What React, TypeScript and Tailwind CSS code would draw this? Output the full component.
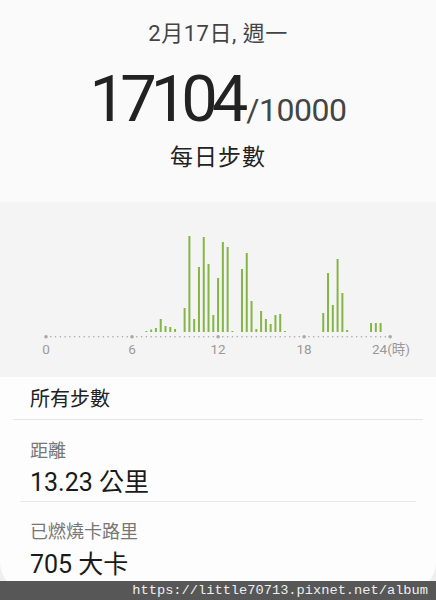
import React from "react";

// bar index (20-minute slots, 72 per day) -> height in px
const bars: [number, number][] = [
  [21, 1], [22, 2.5], [23, 4], [24, 13], [25, 6], [26, 5], [27, 3],
  [29, 24], [30, 96], [31, 13], [32, 65], [33, 95], [34, 68], [35, 17],
  [36, 54], [37, 90], [38, 85], [39, 1], [41, 63], [42, 79], [43, 31],
  [44, 3], [45, 21], [46, 13], [47, 8], [48, 17], [49, 18], [50, 1],
  [58, 19], [59, 59], [60, 27], [61, 73], [62, 39], [63, 2],
  [68, 9], [69, 9], [70, 9],
];

const AXIS_X0 = 46;
const STEP = 4.78;
const BASE = 130;
const AXIS_Y = 134.7;

const font = { fontFamily: "Roboto, 'Noto Sans CJK TC', sans-serif" };

const StepChart: React.FC = () => {
  const dots = Array.from({ length: 73 }, (_, i) => i);
  const labels = [
    { x: 46, t: "0", anchor: "middle" },
    { x: 132, t: "6", anchor: "middle" },
    { x: 218, t: "12", anchor: "middle" },
    { x: 304, t: "18", anchor: "middle" },
    { x: 372, t: "24(時)", anchor: "start" },
  ];
  return (
    <svg width="436" height="175" viewBox="0 0 436 175">
      {bars.map(([i, h]) => (
        <rect
          key={i}
          x={AXIS_X0 + i * STEP - 1}
          y={BASE - h}
          width="2"
          height={h}
          fill="#84b547"
        />
      ))}
      {dots.map((i) => (
        <circle
          key={i}
          cx={AXIS_X0 + i * STEP}
          cy={AXIS_Y}
          r={i % 18 === 0 ? 1.8 : 0.8}
          fill="#a8a8a8"
        />
      ))}
      {labels.map((l) => (
        <text
          key={l.t}
          x={l.x}
          y="152"
          textAnchor={l.anchor as "middle" | "start"}
          fontSize="13.5"
          fill="#9a9a9a"
          style={font}
        >
          {l.t}
        </text>
      ))}
    </svg>
  );
};

export default function App() {
  return (
    <div
      className="relative w-[436px] h-[600px] overflow-hidden bg-[#efefef]"
      style={font}
    >
      <div className="flex h-[202px] flex-col items-center bg-[#fafafa] pt-[20px]">
        <div className="h-[28px] text-[22px] leading-[28px] tracking-[0.5px] text-[#444]">
          2月17日, 週一
        </div>
        <div className="mt-[19px] flex h-[65px] items-baseline">
          <span className="text-[65px] leading-[65px] tracking-[-6px] text-[#222]">
            17104
          </span>
          <span className="ml-[4px] text-[32px] leading-[65px] tracking-[-0.5px] text-[#444]">
            /10000
          </span>
        </div>
        <div className="mt-[11px] h-[30px] text-[23px] leading-[30px] tracking-[1px] text-[#222]">
          每日步數
        </div>
      </div>

      <div className="h-[175px] bg-[#f4f4f4]">
        <StepChart />
      </div>

      <div className="rounded-b-[30px] bg-[#fdfdfd] pb-[11px] pt-[8px]">
        <div className="px-[30px] text-[20px] leading-[28px] text-[#222]">
          所有步數
        </div>
        <div className="mx-[13px] mt-[6px] h-px bg-[#e4e4e4]" />
        <div className="mt-[18px] px-[30px] text-[18px] leading-[26px] text-[#777]">
          距離
        </div>
        <div className="mt-[3px] px-[30px] text-[25px] leading-[32px] text-[#1a1a1a]">
          13.23 公里
        </div>
        <div className="mx-[20px] mt-[2px] h-px bg-[#e8e8e8]" />
        <div className="mt-[17px] px-[30px] text-[18px] leading-[26px] text-[#777]">
          已燃燒卡路里
        </div>
        <div className="mt-[4px] px-[30px] text-[25px] leading-[32px] text-[#1a1a1a]">
          705 大卡
        </div>
      </div>

      <div className="absolute bottom-0 left-0 flex h-[19px] w-full items-center justify-end bg-[#575757] pr-[8px] font-['Liberation_Mono',monospace] text-[13.7px] leading-[19px] text-[#eeeeee]">
        https://little70713.pixnet.net/album
      </div>
    </div>
  );
}
